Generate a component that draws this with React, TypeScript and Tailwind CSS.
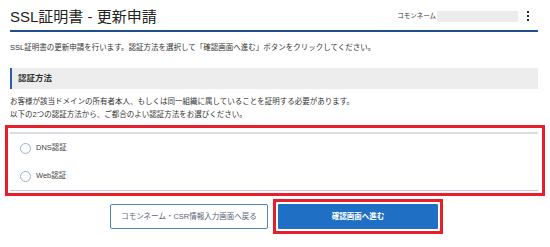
import React from "react";

const font = { fontFamily: '"Liberation Sans", "Noto Sans CJK JP", sans-serif' };

function Radio({ label }: { label: string }) {
  return (
    <div className="flex h-[28px] items-center pl-[10px]">
      <span className="h-[11px] w-[11px] rounded-full border border-[#9fb0c6] bg-white" />
      <span className="ml-[5px] text-[7.5px] leading-none text-[#444]">{label}</span>
    </div>
  );
}

export default function App() {
  return (
    <div className="relative h-[247px] w-[550px] overflow-hidden bg-white text-[#333]" style={font}>
      <div className="ml-[10px] w-[528px]">
        <div className="flex h-[32px] items-center border-b-2 border-[#1f4f8e] pt-[2px]">
          <div className="text-[15px] leading-none text-[#222]">SSL証明書 - 更新申請</div>
          <div className="ml-auto flex items-center">
            <span className="text-[6.5px] leading-none text-[#333]">コモンネーム</span>
            <span className="ml-[1px] h-[11px] w-[81px] bg-[#ececec]" />
            <span className="ml-[9px] mr-[9px] flex flex-col gap-[2px]">
              <span className="h-[2px] w-[2px] bg-[#222]" />
              <span className="h-[2px] w-[2px] bg-[#222]" />
              <span className="h-[2px] w-[2px] bg-[#222]" />
            </span>
          </div>
        </div>
        <p className="mt-[10px] text-[7.5px] leading-[12px]">
          SSL証明書の更新申請を行います。認証方法を選択して「確認画面へ進む」ボタンをクリックしてください。
        </p>
        <div className="mt-[14px] flex h-[21px] items-center border-l-2 border-[#2a5ea6] bg-[#ededed] pl-[6px]">
          <span className="text-[8.5px] font-bold leading-none text-[#333]">認証方法</span>
        </div>
        <p className="mt-[6px] text-[7.5px] leading-[13px]">
          お客様が該当ドメインの所有者本人、もしくは同一組織に属していることを証明する必要があります。
          <br />
          以下の2つの認証方法から、ご都合のよい認証方法をお選びください。
        </p>
      </div>
      <div className="ml-[5px] mt-[4px] w-[540px] border-[3px] border-[#e81f2a] pb-[2px] pl-[2px] pr-[4px] pt-[4px]">
        <div className="h-[2px] bg-[#d8dde6]" />
        <Radio label="DNS認証" />
        <Radio label="Web認証" />
        <div className="h-[1px] bg-[#c3c8d4]" />
      </div>
      <div className="mt-[3px] flex items-center pl-[110px]">
        <button className="flex h-[25px] w-[158px] items-center justify-center rounded-[2px] border border-[#4a86c8] bg-white text-[7.5px] text-[#5a6478]">
          コモンネーム・CSR情報入力画面へ戻る
        </button>
        <div className="ml-[5px] border-[3px] border-[#e81f2a] p-[2px]">
          <button className="flex h-[25px] w-[160px] items-center justify-center rounded-[1px] bg-[#1f70c4] text-[7.5px] font-bold text-white">
            確認画面へ進む
          </button>
        </div>
      </div>
    </div>
  );
}
